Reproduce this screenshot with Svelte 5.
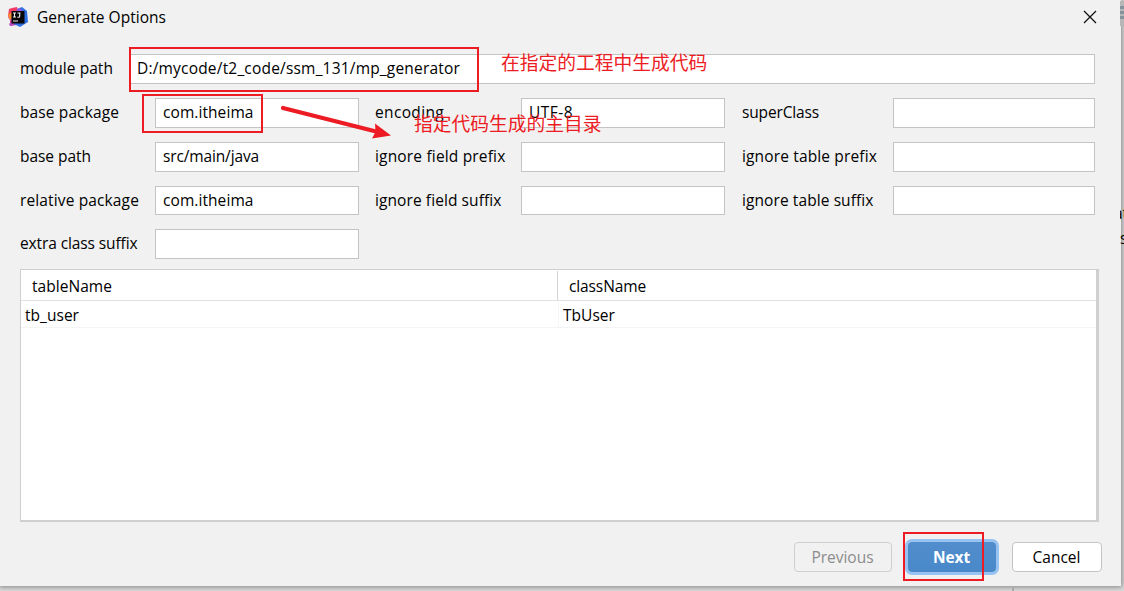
<script>
  const rows = [
    [
      { label: 'base package', lw: 99, value: 'com.itheima', vw: 90.5 },
      { label: 'encoding', lw: 69, value: 'UTF-8', vw: 44 },
      { label: 'superClass', lw: 77, value: '' }
    ],
    [
      { label: 'base path', lw: 71, value: 'src/main/java', vw: 96 },
      { label: 'ignore field prefix', lw: 130.5, value: '' },
      { label: 'ignore table prefix', lw: 135, value: '' }
    ],
    [
      { label: 'relative package', lw: 119, value: 'com.itheima', vw: 90.5 },
      { label: 'ignore field suffix', lw: 126.5, value: '' },
      { label: 'ignore table suffix', lw: 131.5, value: '' }
    ],
    [{ label: 'extra class suffix', lw: 117.5, value: '' }]
  ];

  // Spreads the glyphs so that a text takes the given width.
  function fit(node, width) {
    const natural = node.getBoundingClientRect().width;
    node.style.letterSpacing = `${(width - natural) / node.textContent.length}px`;
  }
</script>

<div class="screen">
  <div class="behind-icon"><i></i><i></i><i></i></div>
  <div class="behind-text first">at</div>
  <div class="behind-text second">s</div>
  <div class="behind-line"></div>

  <main class="dialog">
    <header>
      <svg class="logo" width="20" height="20" viewBox="0 0 20 20">
        <path d="M1 2 4 1 9 0 11 10 4 19 2 18 2 12 0 9Z" fill="#f43b62" />
        <path d="M0 10 5 9 9 18 2 19 1 17 3 15Z" fill="#b64bc0" />
        <path d="M0 7 5 5 5 13 1 12Z" fill="#f98632" />
        <path d="M9 2 14 0 19 4 20 15 12 20 6 17Z" fill="#2f6fe4" />
        <path d="M9 2 12 1 16 5 9 6Z" fill="#8a56dc" />
        <rect x="3.5" y="4" width="13" height="12.5" fill="#080608" />
        <path d="M5 6h3M6.5 6v4M5 10h3M9.5 6h3M11.7 6v3.2q0 1-1.2 1H9.3M5 14h5" fill="none" stroke="#eee" stroke-width="1.1" />
      </svg>
      <h1><span use:fit={129}>Generate Options</span></h1>
      <svg class="close" width="14" height="14" viewBox="0 0 14 14">
        <path d="M1 1 13 13M13 1 1 13" stroke="#111" stroke-width="1.3" />
      </svg>
    </header>

    <section class="form">
      <div class="module">
        <div class="label"><span use:fit={93}>module path</span></div>
        <div class="field"><span use:fit={323}>D:/mycode/t2_code/ssm_131/mp_generator</span></div>
      </div>
      {#each rows as row}
        <div class="row">
          {#each row as cell}
            <div class="label"><span use:fit={cell.lw}>{cell.label}</span></div>
            <div class="field">{#if cell.value}<span use:fit={cell.vw}>{cell.value}</span>{/if}</div>
          {/each}
        </div>
      {/each}
    </section>

    <section class="table">
      <div class="thead">
        <div><span use:fit={80}>tableName</span></div>
        <div><span use:fit={77}>className</span></div>
      </div>
      <div class="tr">
        <div><span use:fit={54}>tb_user</span></div>
        <div><span use:fit={52}>TbUser</span></div>
      </div>
    </section>

    <footer>
      <div class="button disabled"><span use:fit={62}>Previous</span></div>
      <div class="button primary"><span use:fit={37}>Next</span></div>
      <div class="button"><span use:fit={48}>Cancel</span></div>
    </footer>
  </main>

  <div class="mark mark-path"></div>
  <div class="mark mark-package"></div>
  <div class="mark mark-next"></div>
  <div class="note note-path">在指定的工程中生成代码</div>
  <div class="note note-package">指定代码生成的主目录</div>
  <svg class="arrow" width="112" height="38" viewBox="0 0 112 38">
    <path d="M3 6 98 30" stroke="#ed1c24" stroke-width="4.2" stroke-linecap="round" />
    <path d="M95 21.5 111 33.5 92 36.5 95.5 30Z" fill="#ed1c24" />
  </svg>
</div>

<style>
  :global(body) {
    margin: 0;
    overflow: hidden;
  }
  .screen {
    position: relative;
    width: 1124px;
    height: 591px;
    overflow: hidden;
    background: #dadada;
    font: 15.5px/20px 'Open Sans', 'Noto Sans', sans-serif;
    color: #000;
  }
  .screen span {
    display: inline-block;
    white-space: nowrap;
  }
  .dialog {
    position: relative;
    box-sizing: border-box;
    width: 1121px;
    height: 586px;
    background: #f1f1f1;
    box-shadow: 0 0 5px 1px rgba(0, 0, 0, 0.4);
  }
  header {
    display: flex;
    height: 54px;
    padding: 0 24px 0 8px;
    box-sizing: border-box;
  }
  .logo {
    margin-top: 7px;
  }
  .close {
    margin: 10px 0 0 auto;
  }
  h1 {
    margin: 7px 0 0 9px;
    font-size: 15.5px;
    line-height: 20px;
    font-weight: 400;
  }
  .form {
    height: 215px;
    padding-left: 20px;
    box-sizing: border-box;
  }
  .module {
    display: grid;
    grid-template-columns: 109px 966px;
    height: 30px;
  }
  .row {
    display: grid;
    grid-template-columns: 135px 204px 162px 204px 168px 202px;
    margin-top: 14px;
    height: 30px;
  }
  .row:nth-child(4) {
    height: 29px;
  }
  .label {
    padding-top: 4px;
  }
  .row .label:nth-child(3) {
    padding-left: 16px;
  }
  .row .label:nth-child(5) {
    padding-left: 17px;
  }
  .field {
    box-sizing: border-box;
    height: 100%;
    padding: 3px 7px;
    border: 1px solid #c4c4c4;
    background: #fff;
  }
  .table {
    box-sizing: border-box;
    width: 1079px;
    height: 253px;
    margin-left: 20px;
    border: solid #cfcfcf;
    border-width: 1px 3px 2px 1px;
    background: #fff;
  }
  .thead,
  .tr {
    display: grid;
    grid-template-columns: 537px 1fr;
    box-sizing: border-box;
  }
  .thead {
    height: 31px;
    border-bottom: 1px solid #e1e1e1;
  }
  .thead div {
    padding: 6px 11px;
    height: 18px;
  }
  .thead div + div {
    margin-top: 1px;
    padding-top: 5px;
    border-left: 1px solid #d2d2d2;
    margin-left: -1px;
  }
  .tr {
    height: 27px;
    border-bottom: 1px solid #f4f4f4;
  }
  .tr div {
    padding: 4px 4px;
    height: 18px;
  }
  .tr div + div {
    border-left: 1px solid #f7f7f7;
  }
  footer {
    display: flex;
    justify-content: flex-end;
    gap: 16px;
    padding: 20px 19.5px 0 0;
  }
  .button {
    box-sizing: border-box;
    width: 90px;
    height: 30px;
    border: 1px solid #c4c4c4;
    border-radius: 4px;
    background: #fff;
    line-height: 29px;
    text-align: center;
  }
  .disabled {
    width: 98px;
    border-color: #cfcfcf;
    background: #f1f1f1;
    color: #8c8c8c;
  }
  .primary {
    width: 88px;
    border: 0;
    background: linear-gradient(#528dcc, #4989c9);
    line-height: 31px;
    color: #fff;
    font-weight: 700;
    box-shadow: 0 0 0 3px #97c3f3;
  }
  .mark {
    position: absolute;
    box-sizing: border-box;
    border: 2px solid #ed1c24;
  }
  .mark-path {
    left: 129px;
    top: 47px;
    width: 350px;
    height: 45px;
  }
  .mark-package {
    left: 142px;
    top: 94px;
    width: 121px;
    height: 39px;
  }
  .mark-next {
    left: 903px;
    top: 532px;
    width: 81px;
    height: 49px;
  }
  .note {
    position: absolute;
    font: 400 18.75px/24px 'Noto Sans CJK SC', sans-serif;
    white-space: nowrap;
    color: #ed1c24;
  }
  .note-path {
    left: 501px;
    top: 50px;
  }
  .note-package {
    left: 414px;
    top: 111px;
  }
  .arrow {
    position: absolute;
    left: 280px;
    top: 102px;
  }
  .behind-icon {
    position: absolute;
    z-index: 1;
    left: 1120px;
    top: 1px;
    width: 4px;
    height: 25px;
    padding-top: 5px;
    box-sizing: border-box;
    background: #b7b7b7;
  }
  .behind-icon i {
    display: block;
    height: 3px;
    margin-bottom: 2px;
    background: #84939c;
  }
  .behind-text {
    position: absolute;
    z-index: 1;
    left: 1120px;
    width: 4px;
    overflow: hidden;
  }
  .first {
    top: 203px;
    text-indent: -6px;
  }
  .second {
    top: 228px;
  }
  .behind-line {
    position: absolute;
    z-index: 1;
    left: 1012px;
    top: 586px;
    width: 2px;
    height: 5px;
    background: #aaa;
  }
</style>
